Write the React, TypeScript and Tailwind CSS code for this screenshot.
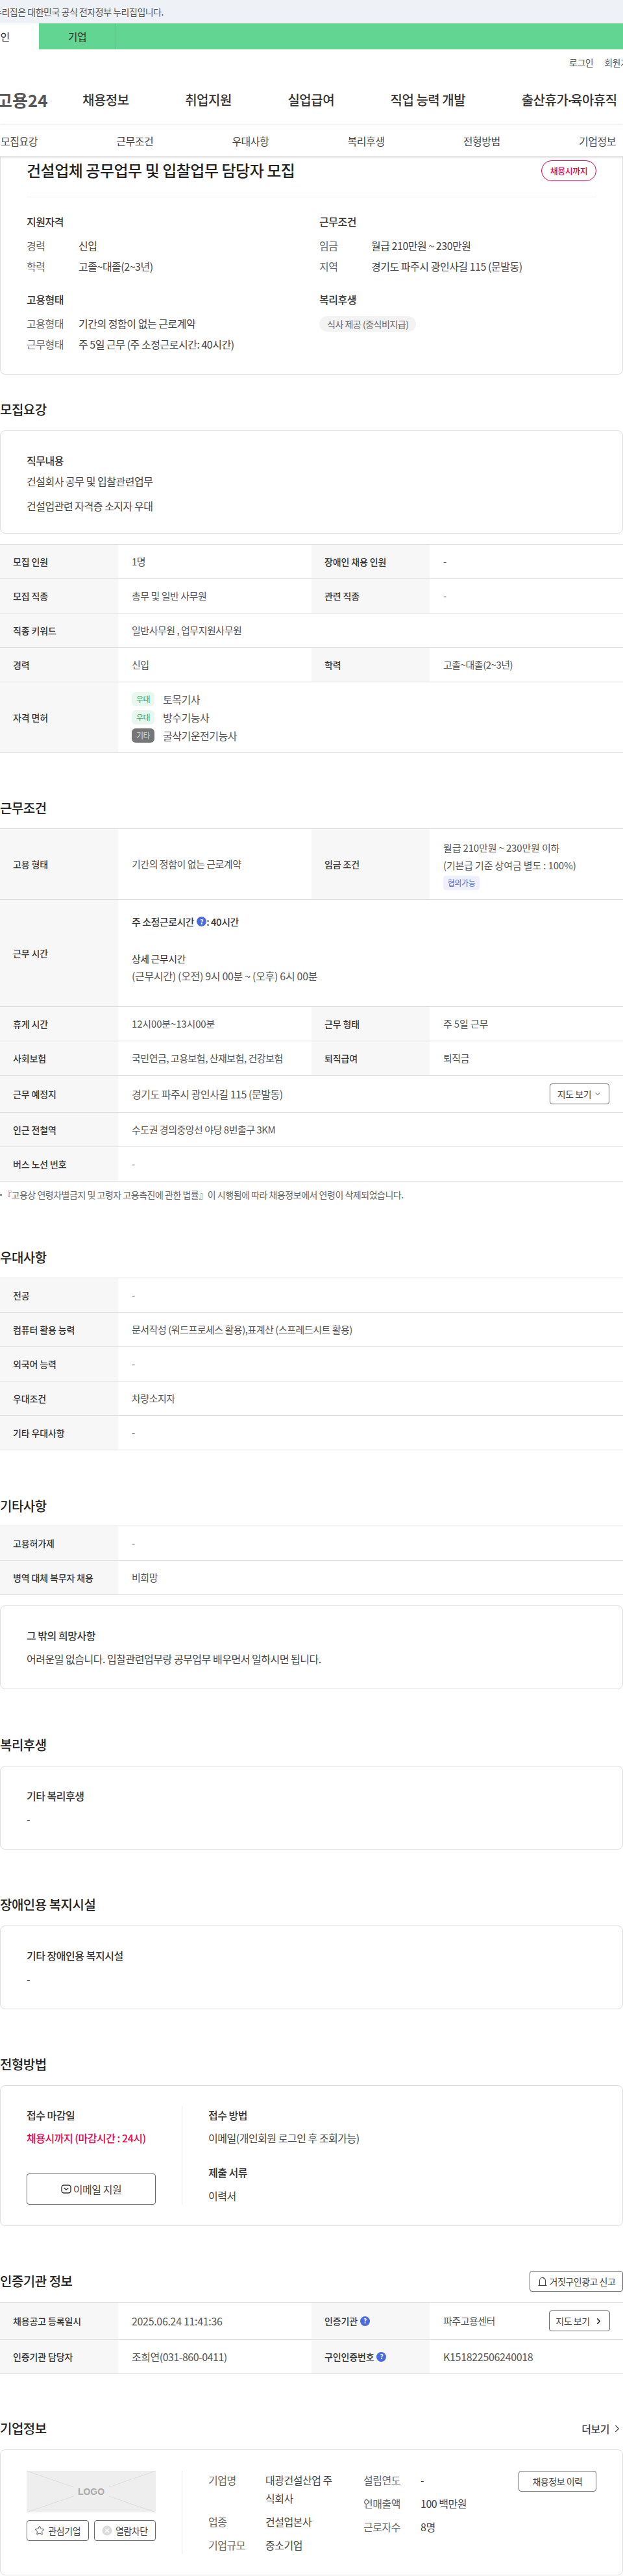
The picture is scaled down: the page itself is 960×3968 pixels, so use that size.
import type { ReactNode } from "react";
import { ChevronDown, ChevronRight, Star } from "lucide-react";

const NAV = ["채용정보", "취업지원", "실업급여", "직업 능력 개발"];
const TABS = ["모집요강", "근무조건", "우대사항", "복리후생", "전형방법", "기업정보"];

function Heading({ children, className = "" }: { children: ReactNode; className?: string }) {
  return <h2 className={`h-8 text-[20px] leading-8 font-medium text-[#222] ${className}`}>{children}</h2>;
}

function Th({ children }: { children: ReactNode }) {
  return (
    <div className="flex w-[182px] shrink-0 items-center gap-1 bg-[#f7f7f7] pl-5 text-[14px] font-medium tracking-[-0.01em] text-[#333]">
      {children}
    </div>
  );
}

function Td({ children, half, className = "" }: { children: ReactNode; half?: boolean; className?: string }) {
  return <div className={`flex items-center pl-[21px] text-[#555] ${half ? "w-[298px] shrink-0" : "flex-1"} ${className}`}>{children}</div>;
}

function Row({ children, h = "h-[53px]" }: { children: ReactNode; h?: string }) {
  return <div className={`flex border-b border-[#ddd] ${h}`}>{children}</div>;
}

function Pair({ a, b, c, d }: { a: ReactNode; b: ReactNode; c: ReactNode; d: ReactNode }) {
  return (
    <Row>
      <Th>{a}</Th>
      <Td half>{b}</Td>
      <Th>{c}</Th>
      <Td>{d}</Td>
    </Row>
  );
}

function Single({ a, b }: { a: ReactNode; b: ReactNode }) {
  return (
    <Row>
      <Th>{a}</Th>
      <Td>{b}</Td>
    </Row>
  );
}

function Table({ children, className = "mt-4" }: { children: ReactNode; className?: string }) {
  return <div className={`border-t border-[#ddd] text-[15px] ${className}`}>{children}</div>;
}

function InfoCard({
  title,
  children,
  className = "mt-4",
  pb = "pb-[32px]",
}: {
  title: string;
  children: ReactNode;
  className?: string;
  pb?: string;
}) {
  return (
    <div className={`rounded-lg border border-[#ddd] px-10 pt-[31px] text-[16px] leading-7 ${pb} ${className}`}>
      <div className="font-medium text-[#333]">{title}</div>
      <div className="mt-2 text-[#444]">{children}</div>
    </div>
  );
}

function Help() {
  return (
    <span className="inline-flex h-[15px] w-[15px] shrink-0 items-center justify-center rounded-full bg-[#4a6ae0] text-[10px] leading-none font-bold text-white">
      ?
    </span>
  );
}

function Tag({ kind, children }: { kind: "우대" | "기타"; children: ReactNode }) {
  return (
    <div className="flex h-[22px] items-center gap-[13px]">
      <span
        className={`flex h-[22px] w-[35px] items-center justify-center rounded-md text-[12px] ${
          kind === "우대" ? "bg-[#e8f8ee] text-[#2e9e5b]" : "bg-[#767676] text-[#ddd]"
        }`}
      >
        {kind}
      </span>
      {children}
    </div>
  );
}

function Spec({ label, children }: { label: string; children: ReactNode }) {
  return (
    <div className="flex">
      <span className="w-20 shrink-0 text-[#666]">{label}</span>
      <span className="text-[#444]">{children}</span>
    </div>
  );
}

function OutlineButton({ children, className = "" }: { children: ReactNode; className?: string }) {
  return (
    <button className={`flex items-center justify-center rounded-[4px] border border-[#666] bg-white text-[#444] ${className}`}>
      {children}
    </button>
  );
}

function MailIcon() {
  return (
    <svg width="16" height="16" viewBox="0 0 16 16" fill="none" stroke="#333" strokeWidth="1.4" className="mr-[3px]">
      <rect x="1" y="2" width="14" height="12" rx="3.5" />
      <path d="M5 6.5 8 9l3-2.5" strokeLinecap="round" />
    </svg>
  );
}

function BellIcon() {
  return (
    <svg width="16" height="16" viewBox="0 0 16 16" fill="none" stroke="#444" strokeWidth="1.1" className="mr-[3px]">
      <path d="M1.5 14.5h13M3.5 14.5V7a4.5 4.5 0 0 1 9 0v7.5" />
      <path d="M8 2.5c1.6 0 2.6 1 2.8 2.4" />
    </svg>
  );
}

function BlockIcon() {
  return (
    <svg width="16" height="16" viewBox="0 0 16 16" className="mr-[5px]">
      <circle cx="8" cy="8" r="7.5" fill="#dadada" />
      <path d="m5 5 6 6M11 5l-6 6" stroke="#fff" strokeWidth="1.6" />
    </svg>
  );
}

function LogoPlaceholder() {
  return (
    <div className="relative flex h-16 items-center justify-center bg-[#eeeeee]">
      <svg viewBox="0 0 199 64" className="absolute inset-0 h-full w-full" fill="none" stroke="#dcdcdc" strokeWidth="1">
        <path d="M0 0 72 25M199 0l-72 25M0 64l72-25M199 64l-72-25" />
      </svg>
      <span className="relative font-['Liberation_Sans',sans-serif] text-[14px] font-bold tracking-normal text-[#aaa]">LOGO</span>
    </div>
  );
}

export default function App() {
  return (
    <div className="w-[960px] overflow-hidden bg-white font-['Noto_Sans_CJK_KR','Noto_Sans',sans-serif] text-[16px] tracking-[-0.03em] text-[#333]">
      <div className="flex h-9 items-center whitespace-nowrap bg-[#eef1f5] text-[14px] text-[#555]">
        <span className="-ml-[10px]">누리집은 대한민국 공식 전자정부 누리집입니다.</span>
      </div>

      <div className="flex h-10 bg-[#62d592] text-[16px]">
        <div className="-ml-[59px] flex w-[119px] shrink-0 items-center justify-center bg-white">개인</div>
        <div className="flex w-[119px] shrink-0 items-center justify-center border-r border-[#55c283] text-[#333]">기업</div>
      </div>

      <div className="flex h-10 items-start gap-[17px] whitespace-nowrap pt-[6px] pl-[877px] text-[14px] leading-7 text-[#555]">
        <span>로그인</span>
        <span>회원가입</span>
      </div>

      <div className="flex h-[76px] items-center whitespace-nowrap">
        <div className="-ml-[5px] w-[79px] shrink-0 text-[26px] leading-none font-bold tracking-normal text-[#555]">고용24</div>
        <nav className="ml-[53px] flex gap-[86.5px] text-[20px] font-medium text-[#333]">
          {NAV.map((n) => (
            <span key={n}>{n}</span>
          ))}
          <span>
            출산휴가<span className="font-['Liberation_Sans',sans-serif] font-bold tracking-[-0.15em]">·</span>육아휴직
          </span>
        </nav>
      </div>

      <div className="relative z-10 flex h-[49px] items-center whitespace-nowrap border-t border-[#eee] bg-white pl-px text-[#444] shadow-[0_1px_3px_rgba(0,0,0,0.25)]">
        {TABS.map((t) => (
          <span key={t} className="w-[178.2px] shrink-0">
            {t}
          </span>
        ))}
      </div>

      <section className="rounded-b-lg border border-t-0 border-[#ddd] px-10 pb-8 leading-7">
        <div className="flex items-start justify-between border-b border-[#eee] pt-[6px] pb-6">
          <h1 className="text-[24px] leading-[30px] font-medium text-[#222]">건설업체 공무업무 및 입찰업무 담당자 모집</h1>
          <span className="flex h-8 w-[85px] items-center justify-center rounded-full border border-[#e6004d] text-[13px] font-medium text-[#e6004d]">
            채용시까지
          </span>
        </div>
        <div className="mt-[23px] grid grid-cols-[451px_1fr] gap-y-[23px]">
          <div>
            <div className="mb-[9px] font-medium">지원자격</div>
            <div className="flex flex-col gap-1">
              <Spec label="경력">신입</Spec>
              <Spec label="학력">고졸~대졸(2~3년)</Spec>
            </div>
          </div>
          <div>
            <div className="mb-[9px] font-medium">근무조건</div>
            <div className="flex flex-col gap-1">
              <Spec label="임금">월급 210만원 ~ 230만원</Spec>
              <Spec label="지역">경기도 파주시 광인사길 115 (문발동)</Spec>
            </div>
          </div>
          <div>
            <div className="mb-[9px] font-medium">고용형태</div>
            <div className="flex flex-col gap-1">
              <Spec label="고용형태">기간의 정함이 없는 근로계약</Spec>
              <Spec label="근무형태">주 5일 근무 (주 소정근로시간: 40시간)</Spec>
            </div>
          </div>
          <div>
            <div className="mb-[9px] font-medium">복리후생</div>
            <span className="inline-flex h-6 items-center rounded-full bg-[#f3f3f3] px-3 text-[14px] text-[#666]">식사 제공 (중식비지급)</span>
          </div>
        </div>
      </section>

      <Heading className="mt-[38px]">모집요강</Heading>
      <InfoCard title="직무내용" pb="pb-[28px]">
        <p className="-mt-1">건설회사 공무 및 입찰관련업무</p>
        <p className="mt-[10px]">건설업관련 자격증 소지자 우대</p>
      </InfoCard>
      <Table>
        <Pair a="모집 인원" b="1명" c="장애인 채용 인원" d="-" />
        <Pair a="모집 직종" b="총무 및 일반 사무원" c="관련 직종" d="-" />
        <Single a="직종 키워드" b="일반사무원 , 업무지원사무원" />
        <Pair a="경력" b="신입" c="학력" d="고졸~대졸(2~3년)" />
        <Row h="h-[109px]">
          <Th>자격 면허</Th>
          <Td>
            <div className="flex flex-col gap-[6px] text-[16px]">
              <Tag kind="우대">토목기사</Tag>
              <Tag kind="우대">방수기능사</Tag>
              <Tag kind="기타">굴삭기운전기능사</Tag>
            </div>
          </Td>
        </Row>
      </Table>

      <Heading className="mt-[69px]">근무조건</Heading>
      <Table className="mt-[15px]">
        <Row h="h-[109px]">
          <Th>고용 형태</Th>
          <Td half>기간의 정함이 없는 근로계약</Td>
          <Th>임금 조건</Th>
          <Td>
            <div className="flex flex-col items-start leading-[27px] tracking-[-0.01em]">
              <span>월급 210만원 ~ 230만원 이하</span>
              <span>(기본급 기준 상여금 별도 : 100%)</span>
              <span className="mt-[3px] flex h-[22px] w-[56px] items-center justify-center rounded bg-[#eef1fb] text-[12px] tracking-[-0.03em] text-[#4a6ae0]">
                협의가능
              </span>
            </div>
          </Td>
        </Row>
        <Row h="h-[165px]">
          <Th>근무 시간</Th>
          <div className="flex-1 pt-[20px] pl-[21px] leading-[27px] text-[#555]">
            <div className="flex items-center gap-1 font-medium text-[#333]">
              주 소정근로시간 <Help />
              <span className="-ml-1">: 40시간</span>
            </div>
            <div className="mt-[30px] text-[#333]">상세 근무시간</div>
            <div className="text-[16px] tracking-[-0.02em]">(근무시간) (오전) 9시 00분 ~ (오후) 6시 00분</div>
          </div>
        </Row>
        <Pair
          a="휴게 시간"
          b={<span className="tracking-[-0.01em]">12시00분~13시00분</span>}
          c="근무 형태"
          d={<span className="tracking-[-0.01em]">주 5일 근무</span>}
        />
        <Pair a="사회보험" b="국민연금, 고용보험, 산재보험, 건강보험" c="퇴직급여" d="퇴직금" />
        <Row h="h-[57px]">
          <Th>근무 예정지</Th>
          <Td className="justify-between pr-[21px] text-[16px]">
            경기도 파주시 광인사길 115 (문발동)
            <OutlineButton className="h-8 w-[92px] gap-1 text-[14px]">
              지도 보기 <ChevronDown size={12} />
            </OutlineButton>
          </Td>
        </Row>
        <Single a="인근 전철역" b="수도권 경의중앙선 야당 8번출구 3KM" />
        <Single a="버스 노선 번호" b="-" />
      </Table>
      <div className="mt-[10px] flex h-5 items-center whitespace-nowrap text-[14px] text-[#666]">
        <span className="mr-px h-[3px] w-[3px] rounded-full bg-[#666]" />『고용상 연령차별금지 및 고령자 고용촉진에 관한 법률』이 시행됨에 따라 채용정보에서 연령이 삭제되었습니다.
      </div>

      <Heading className="mt-[71px]">우대사항</Heading>
      <Table className="mt-[15px]">
        <Single a="전공" b="-" />
        <Single a="컴퓨터 활용 능력" b="문서작성 (워드프로세스 활용),표계산 (스프레드시트 활용)" />
        <Single a="외국어 능력" b="-" />
        <Single a="우대조건" b="차량소지자" />
        <Single a="기타 우대사항" b="-" />
      </Table>

      <Heading className="mt-[70px]">기타사항</Heading>
      <Table className="mt-[14px]">
        <Single a="고용허가제" b="-" />
        <Single a="병역 대체 복무자 채용" b="비희망" />
      </Table>
      <InfoCard title="그 밖의 희망사항">어려운일 없습니다. 입찰관련업무랑 공무업무 배우면서 일하시면 됩니다.</InfoCard>

      <Heading className="mt-[70px]">복리후생</Heading>
      <InfoCard title="기타 복리후생">-</InfoCard>

      <Heading className="mt-[69px]">장애인용 복지시설</Heading>
      <InfoCard title="기타 장애인용 복지시설">-</InfoCard>

      <Heading className="mt-[69px]">전형방법</Heading>
      <div className="mt-4 flex rounded-lg border border-[#ddd] px-10 pt-[31px] pb-[32px] leading-7">
        <div className="flex w-[240px] shrink-0 flex-col justify-between border-r border-[#e5e5e5] pr-10">
          <div>
            <div className="font-medium">접수 마감일</div>
            <div className="mt-[7px] font-medium text-[#e6004d]">채용시까지 (마감시간 : 24시)</div>
          </div>
          <OutlineButton className="h-12 w-full">
            <MailIcon />
            이메일 지원
          </OutlineButton>
        </div>
        <div className="pl-10">
          <div className="font-medium">접수 방법</div>
          <div className="mt-[7px] text-[#444]">이메일(개인회원 로그인 후 조회가능)</div>
          <div className="mt-[25px] font-medium">제출 서류</div>
          <div className="mt-2 text-[#444]">이력서</div>
        </div>
      </div>

      <div className="mt-[69px] flex items-center justify-between">
        <Heading>인증기관 정보</Heading>
        <OutlineButton className="h-8 w-[144px] text-[14px]">
          <BellIcon />
          거짓구인광고 신고
        </OutlineButton>
      </div>
      <Table>
        <Row h="h-[57px]">
          <Th>채용공고 등록일시</Th>
          <Td half className="text-[16px] tracking-[-0.02em]">
            2025.06.24 11:41:36
          </Td>
          <Th>
            인증기관 <Help />
          </Th>
          <Td className="justify-between pr-5">
            파주고용센터
            <OutlineButton className="h-8 w-[94px] gap-[6px] text-[14px]">
              지도 보기 <ChevronRight size={15} strokeWidth={2.5} className="text-[#222]" />
            </OutlineButton>
          </Td>
        </Row>
        <Row>
          <Th>인증기관 담당자</Th>
          <Td half className="text-[16px]">
            조희연(031-860-0411)
          </Td>
          <Th>
            구인인증번호 <Help />
          </Th>
          <Td className="text-[16px] tracking-[-0.02em]">K151822506240018</Td>
        </Row>
      </Table>

      <div className="mt-[68px] flex items-center justify-between">
        <Heading>기업정보</Heading>
        <div className="flex items-center gap-[3px] font-medium text-[#444]">
          더보기 <ChevronRight size={18} strokeWidth={1.5} />
        </div>
      </div>
      <div className="mt-4 flex h-[194px] rounded-lg border border-[#ddd] px-10 pt-[32px] leading-7">
        <div className="h-32 w-[240px] shrink-0 border-r border-[#e5e5e5] pr-10">
          <LogoPlaceholder />
          <div className="mt-3 flex gap-2 text-[14px]">
            <OutlineButton className="h-8 flex-1">
              <Star size={16} strokeWidth={1.5} className="mr-[5px]" />
              관심기업
            </OutlineButton>
            <OutlineButton className="h-8 flex-1">
              <BlockIcon />
              열람차단
            </OutlineButton>
          </div>
        </div>
        <div className="flex flex-1 pl-10">
          <div className="flex w-[239px] shrink-0 flex-col gap-2">
            <div className="flex">
              <span className="w-[88px] shrink-0 text-[#666]">기업명</span>
              <span className="w-[110px] break-all text-[#444]">대광건설산업 주식회사</span>
            </div>
            <div className="flex">
              <span className="w-[88px] shrink-0 text-[#666]">업종</span>
              <span className="text-[#444]">건설업본사</span>
            </div>
            <div className="flex">
              <span className="w-[88px] shrink-0 text-[#666]">기업규모</span>
              <span className="text-[#444]">중소기업</span>
            </div>
          </div>
          <div className="flex w-[239px] shrink-0 flex-col gap-2">
            <div className="flex">
              <span className="w-[88px] shrink-0 text-[#666]">설립연도</span>
              <span className="text-[#444]">-</span>
            </div>
            <div className="flex">
              <span className="w-[88px] shrink-0 text-[#666]">연매출액</span>
              <span className="text-[#444]">100 백만원</span>
            </div>
            <div className="flex">
              <span className="w-[88px] shrink-0 text-[#666]">근로자수</span>
              <span className="text-[#444]">8명</span>
            </div>
          </div>
          <OutlineButton className="h-8 w-[120px] shrink-0 text-[14px]">채용정보 이력</OutlineButton>
        </div>
      </div>
    </div>
  );
}
